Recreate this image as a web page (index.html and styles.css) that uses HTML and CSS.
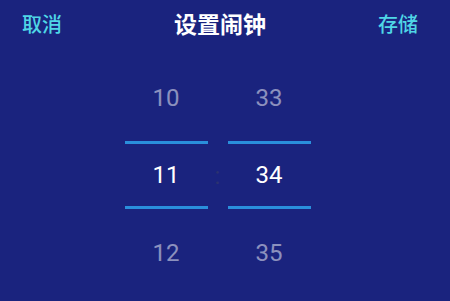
FILE: index.html
```html
<!DOCTYPE html>
<html lang="zh-CN">
<head>
<meta charset="utf-8">
<title>设置闹钟</title>
<link rel="stylesheet" href="styles.css">
</head>
<body>
<div class="screen">
  <header class="bar">
    <span class="action cancel">取消</span>
    <h1 class="title">设置闹钟</h1>
    <span class="action save">存储</span>
  </header>
  <section class="picker">
    <div class="wheel">
      <div class="item item-top faded">10</div>
      <div class="rule"></div>
      <div class="item item-mid">11</div>
      <div class="rule"></div>
      <div class="item item-bottom faded">12</div>
    </div>
    <div class="sep">:</div>
    <div class="wheel">
      <div class="item item-top faded">33</div>
      <div class="rule"></div>
      <div class="item item-mid">34</div>
      <div class="rule"></div>
      <div class="item item-bottom faded">35</div>
    </div>
  </section>
</div>
</body>
</html>
```
FILE: styles.css
```css
html, body {
  margin: 0;
  padding: 0;
  background: #1a237e;
}
body {
  width: 450px;
  height: 301px;
  overflow: hidden;
  font-family: Roboto, "Noto Sans CJK SC", sans-serif;
}
.screen {
  width: 435px;
  height: 301px;
}
.bar {
  display: flex;
  align-items: center;
  height: 46px;
  padding: 0 17px 0 22px;
}
.action {
  font-family: "Noto Sans CJK SC", sans-serif;
  font-size: 20px;
  font-weight: 500;
  color: #4fd6e6;
  width: 42px;
}
.save {
  text-align: right;
}
.title {
  flex: 1;
  margin: 0;
  text-align: center;
  font-family: "Noto Sans CJK SC", sans-serif;
  font-size: 23px;
  font-weight: 700;
  color: #ffffff;
}
.picker {
  display: flex;
  justify-content: center;
  padding-top: 9px;
}
.wheel {
  display: flex;
  flex-direction: column;
  width: 83px;
}
.item {
  display: flex;
  align-items: center;
  justify-content: center;
  font-size: 24px;
  color: #ffffff;
}
.faded {
  color: rgba(255, 255, 255, 0.5);
}
.item-top { height: 86px; }
.item-mid { height: 62px; }
.item-bottom { height: 88px; }
.rule {
  height: 3px;
  background: #2a8fdc;
}
.sep {
  width: 20px;
  display: flex;
  align-items: center;
  justify-content: center;
  font-size: 24px;
  color: #2c3270;
}
```
